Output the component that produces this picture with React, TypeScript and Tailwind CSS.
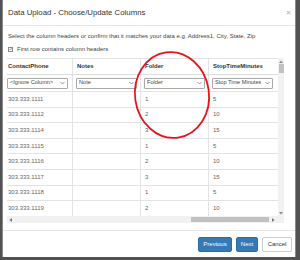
import React from "react";

const rows = [
  ["303.333.1111", "", "1", "5"],
  ["303.333.1112", "", "2", "10"],
  ["303.333.1114", "", "3", "15"],
  ["303.333.1115", "", "1", "5"],
  ["303.333.1116", "", "2", "10"],
  ["303.333.1117", "", "3", "15"],
  ["303.333.1118", "", "1", "5"],
  ["303.333.1119", "", "2", "10"],
];

const widths = ["w-[65px]", "w-[68px]", "w-[68px]", "w-[70px]"];
const pads = ["pl-[1px]", "pl-[4px]", "pl-[4px]", "pl-[4px]"];

function Chevron() {
  return (
    <svg width="5" height="4" viewBox="0 0 5 4" className="shrink-0">
      <path d="M0.5 1 L2.5 3 L4.5 1" fill="none" stroke="#666" strokeWidth="0.7" />
    </svg>
  );
}

function Select({ label }: { label: string }) {
  return (
    <div className="h-[11px] w-[61px] border border-[#a9a9a9] rounded-[1px] bg-white flex items-center justify-between px-[2px] text-[5.6px] text-[#444] leading-none">
      <span className="truncate">{label}</span>
      <Chevron />
    </div>
  );
}

export default function App() {
  const headers = ["ContactPhone", "Notes", "Folder", "StopTimeMinutes"];
  const selects = ["<Ignore Column>", "Note", "Folder", "Stop Time Minutes"];
  return (
    <div className="w-[300px] h-[260px] bg-[#525252] pl-[2px] pr-[4px] pb-[3px] font-['Liberation_Sans',Arial,sans-serif]">
      <div className="relative h-full bg-white flex flex-col border-x border-[#8a8a8a]">
        {/* header */}
        <div className="h-[26px] shrink-0 border-b border-[#e5e5e5] flex items-center justify-between pl-[5px] pr-[4px]">
          <span className="text-[7.8px] text-[#333] leading-none">Data Upload - Choose/Update Columns</span>
          <span className="text-[8px] text-[#bbb] leading-none font-bold">×</span>
        </div>
        {/* body */}
        <div className="px-[4px] pt-[6px] flex flex-col">
          <div className="text-[6px] leading-[8px] text-[#444] pl-[1px]">
            Select the column headers or confirm that it matches your data e.g. Address1, City, State, Zip
          </div>
          <div className="mt-[5px] flex items-center gap-[4px] pl-[1px] text-[6px] leading-[8px] text-[#444]">
            <div className="w-[5px] h-[5px] border border-[#888] bg-white flex items-center justify-center">
              <svg width="4" height="4" viewBox="0 0 4 4">
                <path d="M0.5 2 L1.6 3.1 L3.5 0.8" fill="none" stroke="#333" strokeWidth="0.7" />
              </svg>
            </div>
            <span>First row contains column headers</span>
          </div>
          {/* table area */}
          <div className="mt-[5px] flex flex-col w-[277px] h-[165px]">
            <div className="flex h-[158px]">
              <div className="w-[271px] flex flex-col border-t border-[#e3e3e3]">
                <div className="flex h-[16px] border-b border-[#ddd]">
                  {headers.map((h, i) => (
                    <div key={h} className={`${widths[i]} ${pads[i]} ${i > 0 ? "border-l border-[#e3e3e3]" : ""} flex items-center text-[6px] font-bold text-[#333]`}>
                      {h}
                    </div>
                  ))}
                </div>
                <div className="flex h-[16px]">
                  {selects.map((s, i) => (
                    <div key={s} className={`${widths[i]} ${i === 0 ? "pl-0" : "pl-[3px]"} ${i > 0 ? "border-l border-[#e3e3e3]" : ""} flex items-center`}>
                      <Select label={s} />
                    </div>
                  ))}
                </div>
                {rows.map((r, ri) => (
                  <div key={ri} className="flex h-[15.6px] border-t border-[#e3e3e3]">
                    {r.map((c, i) => (
                      <div key={i} className={`${widths[i]} ${pads[i]} ${i > 0 ? "border-l border-[#e3e3e3]" : ""} flex items-center text-[6px] text-[#666]`}>
                        {c}
                      </div>
                    ))}
                  </div>
                ))}
              </div>
              {/* vertical scrollbar */}
              <div className="w-[6px] bg-[#f1f1f1] flex flex-col items-center">
                <div className="h-[6px] flex items-center justify-center">
                  <svg width="4" height="3" viewBox="0 0 4 3"><path d="M0 3 L2 0.5 L4 3 Z" fill="#888" /></svg>
                </div>
                <div className="w-[5px] h-[9px] bg-[#c1c1c1]" />
                <div className="flex-1" />
                <div className="h-[6px] flex items-center justify-center">
                  <svg width="4" height="3" viewBox="0 0 4 3"><path d="M0 0 L2 2.5 L4 0 Z" fill="#888" /></svg>
                </div>
              </div>
            </div>
            {/* horizontal scrollbar */}
            <div className="flex h-[7px]">
              <div className="w-[271px] bg-[#f1f1f1] flex items-center">
                <div className="w-[6px] flex items-center justify-center">
                  <svg width="3" height="4" viewBox="0 0 3 4"><path d="M3 0 L0.5 2 L3 4 Z" fill="#777" /></svg>
                </div>
                <div className="w-[178px]" />
                <div className="w-[78px] h-[5px] bg-[#c1c1c1]" />
                <div className="w-[9px] flex items-center justify-center">
                  <svg width="3" height="4" viewBox="0 0 3 4"><path d="M0 0 L2.5 2 L0 4 Z" fill="#777" /></svg>
                </div>
              </div>
              <div className="w-[6px] bg-[#f1f1f1]" />
            </div>
          </div>
        </div>
        {/* footer */}
        <div className="mt-[7px] border-t border-[#e5e5e5] flex-1 flex justify-end items-start pt-[6px] pr-[3px] gap-[4px]">
          <div className="w-[34px] h-[15px] rounded-[2px] bg-[#337ab7] border border-[#2e6da4] text-white text-[6px] flex items-center justify-center">Previous</div>
          <div className="w-[22px] h-[15px] rounded-[2px] bg-[#337ab7] border border-[#2e6da4] text-white text-[6px] flex items-center justify-center">Next</div>
          <div className="w-[30px] h-[15px] rounded-[2px] bg-white border border-[#ccc] text-[#333] text-[6px] flex items-center justify-center">Cancel</div>
        </div>
        {/* annotation circle */}
        <svg className="absolute left-0 top-0 pointer-events-none" width="294" height="257" viewBox="0 0 294 257">
          <ellipse cx="169" cy="95" rx="37" ry="43" fill="none" stroke="#e8141c" strokeWidth="1.8" transform="rotate(-8 169 95)" />
        </svg>
      </div>
    </div>
  );
}
